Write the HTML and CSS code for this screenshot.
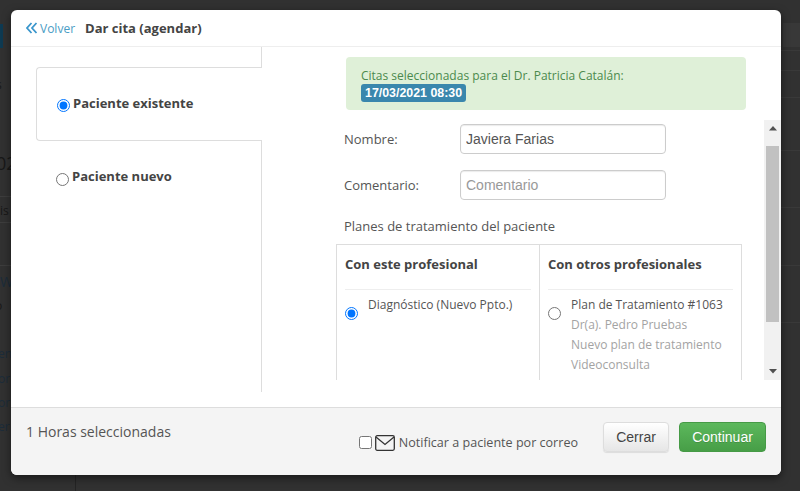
FILE: index.html
```html
<!DOCTYPE html>
<html lang="es">
<head>
<meta charset="utf-8">
<title>Dar cita (agendar)</title>
<link rel="stylesheet" href="styles.css">
</head>
<body>
<div class="backdrop-frags">
  <span class="frag f1"></span>
  <span class="frag f2"></span>
  <span class="frag-text t1">s</span>
  <span class="frag-text t2">02</span>
  <span class="frag-text t3">is</span>
  <span class="frag-text t4">W</span>
  <span class="frag-text t9">o</span>
  <span class="frag-text t5">en</span>
  <span class="frag-text t6">or</span>
  <span class="frag-text t7">or</span>
  <span class="frag-text t8">er</span>
  <span class="line l1"></span><span class="line l2"></span><span class="line l3"></span>
  <span class="line r r1"></span><span class="line r r2"></span><span class="line r r3"></span><span class="line r r4"></span><span class="line r r5"></span><span class="line r r6"></span><span class="line r r7"></span>
  <span class="vline"></span>
</div>
<main class="modal">
  <header class="head">
    <a class="back">
      <svg class="chev" viewBox="0 0 12 12" width="12" height="12"><path d="M5.500 1 1 6l4.500 5M10.500 1 6 6l4.500 5" fill="none" stroke="#3a96cc" stroke-width="1.800"/></svg>
      <span>Volver</span>
    </a>
    <h1 class="title">Dar cita (agendar)</h1>
  </header>
  <div class="body">
    <aside class="side">
      <div class="tab active">
        <input class="radio" type="radio" name="kind" checked>
        <span>Paciente existente</span>
      </div>
      <div class="tab">
        <input class="radio" type="radio" name="kind">
        <span>Paciente nuevo</span>
      </div>
    </aside>
    <section class="content">
      <div class="alert">
        <div>Citas seleccionadas para el Dr. Patricia Catalán:</div>
        <span class="badge">17/03/2021 08:30</span>
      </div>
      <div class="scroller">
        <div class="inner">
          <div class="row"><label>Nombre:</label><input class="field" value="Javiera Farias"></div>
          <div class="row"><label>Comentario:</label><input class="field" placeholder="Comentario"></div>
          <p class="plans">Planes de tratamiento del paciente</p>
          <div class="table">
            <div class="col">
              <h2>Con este profesional</h2>
              <div class="plan">
                <input class="radio" type="radio" name="plan" checked>
                <div class="info"><div>Diagnóstico (Nuevo Ppto.)</div></div>
              </div>
            </div>
            <div class="col">
              <h2>Con otros profesionales</h2>
              <div class="plan">
                <input class="radio" type="radio" name="plan">
                <div class="info">
                  <div>Plan de Tratamiento #1063</div>
                  <div class="muted">Dr(a). Pedro Pruebas</div>
                  <div class="muted">Nuevo plan de tratamiento</div>
                  <div class="muted">Videoconsulta</div>
                </div>
              </div>
            </div>
          </div>
        </div>
        <div class="bar">
          <svg class="arrow" viewBox="0 0 8 5" width="8" height="5"><path d="M0 4.500 4 0l4 4.500z" fill="#505050"/></svg>
          <div class="track"><div class="thumb"></div></div>
          <svg class="arrow" viewBox="0 0 8 5" width="8" height="5"><path d="M0 0 4 4.500 8 0z" fill="#505050"/></svg>
        </div>
      </div>
    </section>
  </div>
  <footer class="foot">
    <div class="count">1 Horas seleccionadas</div>
    <div class="actions">
      <label class="notify">
        <input class="check" type="checkbox">
        <svg viewBox="0 0 20 16" width="20" height="16"><rect x=".7" y=".7" width="18.600" height="14.600" rx="1.500" fill="none" stroke="#333" stroke-width="1.300"/><path d="M1 2l9 7.500L19 2" fill="none" stroke="#333" stroke-width="1.300"/></svg>
        <span>Notificar a paciente por correo</span>
      </label>
      <button class="btn close">Cerrar</button>
      <button class="btn go">Continuar</button>
    </div>
  </footer>
</main>
</body>
</html>
```
FILE: styles.css
```css
* { box-sizing: border-box; }
html, body { margin: 0; height: 491px; overflow: hidden; }
body {
  background: #313131;
  font-family: "Open Sans", "Noto Sans", sans-serif;
  font-size: 12px;
  color: #555;
  padding: 10px 19px 16px 11px;
  position: relative;
}
.backdrop-frags { position: absolute; inset: 0; overflow: hidden; }
.frag { position: absolute; left: 0; top: 24px; width: 3px; height: 24px; background: #0e3a52; }
.f2 { left: 783px; top: 23px; width: 17px; background: #383838; }
.frag-text { position: absolute; left: 0; color: #1c2c3a; font-size: 12px; line-height: 14px; }
.t1 { top: 78px; left: -4px; color: #181818; }
.t2 { top: 153px; left: -4px; font-size: 18px; line-height: 20px; color: #181818; }
.t3 { top: 204px; color: #181818; }
.t4 { top: 275px; left: 0; font-size: 14px; }
.t9 { top: 299px; left: -5px; color: #181818; }
.t5 { top: 347px; left: -2px; }
.t6 { top: 372px; left: -2px; }
.t7 { top: 396px; left: -2px; }
.t8 { top: 420px; left: -2px; }
.line { position: absolute; left: 0; width: 11px; height: 1px; background: #3d3d3d; }
.l1 { top: 196px; }
.l2 { top: 222px; }
.l3 { top: 265px; }
.r { left: 781px; width: 19px; background: #393939; }
.r1 { top: 50px; }
.r2 { top: 70px; }
.r3 { top: 97px; }
.r4 { top: 150px; }
.r5 { top: 207px; }
.r6 { top: 265px; }
.r7 { top: 322px; }
.vline { position: absolute; left: 75px; top: 475px; width: 1px; height: 16px; background: #242424; }

.modal {
  position: relative;
  width: 770px;
  height: 465px;
  background: #fff;
  border-radius: 6px;
  display: flex;
  flex-direction: column;
  overflow: hidden;
  box-shadow: 0 3px 9px rgba(0,0,0,.5);
}
.head {
  height: 37px;
  flex: none;
  display: flex;
  align-items: center;
  padding: 0 0 0 15px;
  border-bottom: 1px solid #eee;
}
.back { display: flex; align-items: center; gap: 2px; color: #4a9cc5; font-size: 12px; }
.title { margin: 0 0 0 10px; font-size: 13px; font-weight: 700; color: #444; }
.body { flex: 1; display: flex; min-height: 0; }
.side {
  width: 251px;
  height: 345px;
  flex: none;
  padding-top: 20px;
  border-right: 1px solid #ddd;
  margin-bottom: 15px;
  font-weight: 700;
  font-size: 13px;
  color: #444;
}
.tab {
  margin-left: 25px;
  margin-right: -1px;
  height: 74px;
  padding: 26px 0 0 20px;
  display: flex;
  align-items: flex-start;
  gap: 3px;
}
.tab.active {
  background: #fff;
  border: 1px solid #ddd;
  border-right: 0;
  border-radius: 4px 0 0 4px;
  position: relative;
}
.tab + .tab { padding-top: 26px; }
.radio { width: 13px; height: 13px; margin: 5px 0 0; accent-color: #0075ff; flex: none; }
.tab + .tab .radio { margin-top: 6px; }
.content { flex: 1; min-width: 0; padding: 10px 0 0 84px; display: flex; flex-direction: column; }
.alert {
  width: 400px;
  height: 53px;
  background: #dff0d8;
  border-radius: 4px;
  color: #4b8a4d;
  font-size: 12px;
  line-height: 17px;
  padding: 10px 15px;
  flex: none;
}
.badge {
  display: block;
  width: fit-content;
  background: #3a87ad;
  color: #fff;
  font-family: "Liberation Sans", sans-serif;
  font-weight: 700;
  font-size: 12.400px;
  line-height: 18px;
  padding: 0 4px;
  border-radius: 3px;
}
.scroller { height: 260px; margin: 10px 0 0 -10px; display: flex; overflow: hidden; flex: none; }
.inner { width: 420px; flex: none; padding-top: 4px; }
.row { height: 46px; display: flex; align-items: flex-start; padding-left: 8px; }
.row label { width: 116px; padding-top: 7px; line-height: 17px; font-size: 13px; color: #555; }
.field {
  width: 206px;
  height: 30px;
  border: 1px solid #ccc;
  border-radius: 4px;
  padding: 0 5px;
  font: 14px "Liberation Sans", sans-serif;
  color: #555;
  box-shadow: inset 0 1px 1px rgba(0,0,0,.08);
}
.field::placeholder { color: #999; }
.plans { margin: 0; padding: 1px 0 0 8px; height: 28px; line-height: 19px; font-size: 13px; color: #555; }
.table { width: 406px; height: 136px; border: 1px solid #ddd; border-bottom: 0; display: flex; }
.col { width: 202px; padding: 0 8px; }
.col + .col { border-left: 1px solid #ddd; width: 202px; padding: 0 8px; }
.col h2 { margin: 0; height: 45px; padding-top: 9px; line-height: 20px; border-bottom: 1px solid #eee; font-size: 13px; font-weight: 700; color: #444; }
.plan { display: flex; gap: 10px; padding-top: 5px; font-size: 12px; line-height: 20px; color: #555; }
.plan .radio { margin-top: 12px; }
.muted { color: #a3a3a3; }
.bar { width: 17px; margin-left: 8px; background: #f1f1f1; display: flex; flex-direction: column; align-items: center; flex: none; }
.arrow { flex: none; margin: 6px 0; }
.track { flex: 1; width: 100%; padding-top: 9px; }
.thumb { width: 13px; height: 176px; margin: 0 auto 0 2px; background: #c1c1c1; }
.foot {
  flex: none;
  height: 68px;
  background: #f4f4f4;
  border-top: 1px solid #ddd;
  display: flex;
  justify-content: space-between;
  padding: 14px 15px 0 15px;
}
.count { font-size: 14px; line-height: 20px; color: #555; }
.actions { display: flex; align-items: flex-start; }
.notify { display: flex; align-items: center; gap: 4px; margin: 12px 25px 0 0; font-size: 12.570px; color: #555; }
.check { width: 13px; height: 13px; margin: 0 -1px 0 0; }
.btn { height: 30px; border-radius: 4px; font: 14px "Liberation Sans", sans-serif; padding: 0; }
.close { width: 66px; color: #444; background: linear-gradient(#fff, #e6e6e6); border: 1px solid #ddd; box-shadow: 0 1px 1px rgba(0,0,0,.1); }
.go { width: 87px; margin-left: 10px; color: #fff; background: linear-gradient(#5cb85c, #479e47); border: 1px solid #469a46; text-shadow: 0 1px 0 rgba(0,0,0,.15); }
```
